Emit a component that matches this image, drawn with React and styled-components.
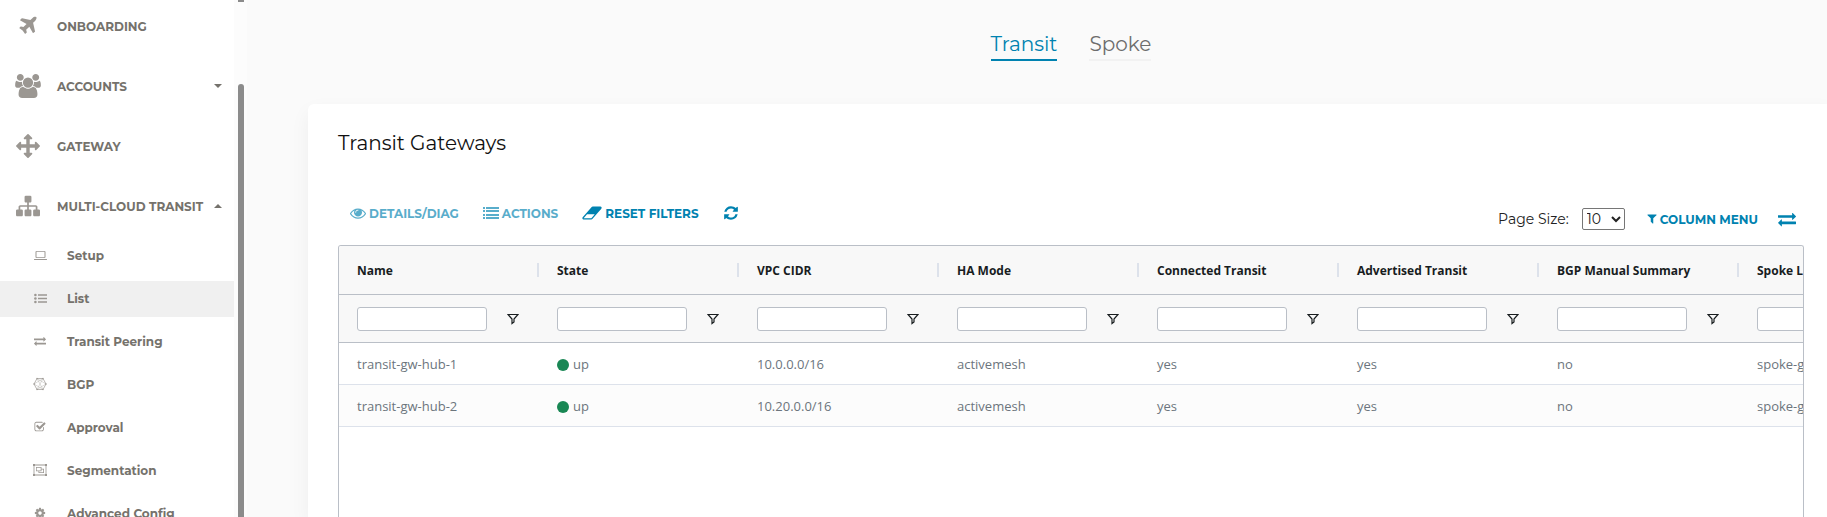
import React from "react";
import styled, { createGlobalStyle } from "styled-components";

const brand = "Montserrat, Inter, 'Open Sans', sans-serif";
const body = "'Segoe UI', 'Open Sans', 'Noto Sans', sans-serif";

const GlobalStyle = createGlobalStyle`
  *, *::before, *::after { box-sizing: border-box; }
  body {
    margin: 0;
    background: #fafafa;
    color: #212529;
    font-family: ${brand};
    overflow: hidden;
  }
  button, input, select { font-family: inherit; margin: 0; }
  a { color: inherit; text-decoration: none; }
`;

/* ---------- icons ---------- */

const Svg = styled.svg`
  display: block;
  flex: none;
  width: ${(p) => p.$w}px;
  height: ${(p) => p.$h || p.$w}px;
  fill: currentColor;
`;

const paths = {
  plane:
    "M1568 160q44 52 12 148t-108 172l-161 161 160 696q5 19-12 33l-128 96q-7 6-19 6-4 0-7-1-15-3-21-16l-279-508-259 259 53 194q5 17-8 31l-96 96q-9 9-23 9h-2q-15-2-24-13l-189-252-252-189q-11-7-13-23-1-13 9-25l96-97q9-9 23-9 6 0 8 1l194 53 259-259-508-279q-14-8-17-24-2-16 9-27l128-128q14-13 30-8l665 159 160-160q76-76 172-108t148 12z",
  users:
    "M529 896q-162 5-265 128h-134q-82 0-138-40.5t-56-118.5q0-353 124-353 6 0 43.5 21t97.5 42.5 119 21.5q67 0 133-23-5 37-5 66 0 139 81 256zm1071 637q0 120-73 189.5t-194 69.5h-874q-121 0-194-69.5t-73-189.5q0-53 3.5-103.5t14-109 26.5-108.5 43-97.5 62-81 85.5-53.5 111.5-20q10 0 43 21.5t73 48 107 48 135 21.5 135-21.5 107-48 73-48 43-21.5q61 0 111.5 20t85.5 53.5 62 81 43 97.5 26.5 108.5 14 109 3.5 103.5zm-1024-1277q0 106-75 181t-181 75-181-75-75-181 75-181 181-75 181 75 75 181zm704 384q0 159-112.5 271.5t-271.5 112.5-271.5-112.5-112.5-271.5 112.5-271.5 271.5-112.5 271.5 112.5 112.5 271.5zm576 225q0 78-56 118.5t-138 40.5h-134q-103-123-265-128 81-117 81-256 0-29-5-66 66 23 133 23 59 0 119-21.5t97.5-42.5 43.5-21q124 0 124 353zm-128-609q0 106-75 181t-181 75-181-75-75-181 75-181 181-75 181 75 75 181z",
  arrows:
    "M1792 896q0 26-19 45l-256 256q-19 19-45 19t-45-19-19-45v-128h-384v384h128q26 0 45 19t19 45-19 45l-256 256q-19 19-45 19t-45-19l-256-256q-19-19-19-45t19-45 45-19h128v-384h-384v128q0 26-19 45t-45 19-45-19l-256-256q-19-19-19-45t19-45l256-256q19-19 45-19t45 19 19 45v128h384v-384h-128q-26 0-45-19t-19-45 19-45l256-256q19-19 45-19t45 19l256 256q19 19 19 45t-19 45-45 19h-128v384h384v-128q0-26 19-45t45-19 45 19l256 256q19 19 19 45z",
  sitemap:
    "M1792 1248v320q0 40-28 68t-68 28h-320q-40 0-68-28t-28-68v-320q0-40 28-68t68-28h96v-192h-512v192h96q40 0 68 28t28 68v320q0 40-28 68t-68 28h-320q-40 0-68-28t-28-68v-320q0-40 28-68t68-28h96v-192h-512v192h96q40 0 68 28t28 68v320q0 40-28 68t-68 28h-320q-40 0-68-28t-28-68v-320q0-40 28-68t68-28h96v-192q0-52 38-90t90-38h512v-192h-96q-40 0-68-28t-28-68v-320q0-40 28-68t68-28h320q40 0 68 28t28 68v320q0 40-28 68t-68 28h-96v192h512q52 0 90 38t38 90v192h96q40 0 68 28t28 68z",
  exchange:
    "M1792 1184v192q0 13-9.5 22.5t-22.5 9.5h-1376v192q0 13-9.5 22.5t-22.5 9.5q-12 0-24-10l-319-320q-9-9-9-22 0-14 9-23l320-320q9-9 23-9 13 0 22.5 9.5t9.5 22.5v192h1376q13 0 22.5 9.5t9.5 22.5zm0-544q0 14-9 23l-320 320q-9 9-23 9-13 0-22.5-9.5t-9.5-22.5v-192h-1376q-13 0-22.5-9.5t-9.5-22.5v-192q0-13 9.5-22.5t22.5-9.5h1376v-192q0-14 9-23t23-9q12 0 24 10l319 319q9 9 9 23z",
  check:
    "M1472 930v318q0 119-84.5 203.5t-203.5 84.5h-832q-119 0-203.5-84.5t-84.5-203.5v-832q0-119 84.5-203.5t203.5-84.5h832q63 0 117 25 15 7 18 23 3 17-9 29l-49 49q-10 10-23 10-3 0-9-2-23-6-45-6h-832q-66 0-113 47t-47 113v832q0 66 47 113t113 47h832q66 0 113-47t47-113v-254q0-13 9-22l64-64q10-10 23-10 6 0 12 3 20 8 20 29zm231-489l-814 814q-24 24-57 24t-57-24l-430-430q-24-24-24-57t24-57l110-110q24-24 57-24t57 24l263 263 647-647q24-24 57-24t57 24l110 110q24 24 24 57t-24 57z",
  cog:
    "M1152 896q0-106-75-181t-181-75-181 75-75 181 75 181 181 75 181-75 75-181zm512-109v222q0 12-8 23t-20 13l-185 28q-19 54-39 91 35 50 107 138 10 12 10 25t-9 23q-27 37-99 108t-94 71q-12 0-26-9l-138-108q-44 23-91 38-16 136-29 186-7 28-36 28h-222q-14 0-24.5-8.5t-11.5-21.5l-28-184q-49-16-90-37l-141 107q-10 9-25 9-14 0-25-11-126-114-165-168-7-10-7-23 0-12 8-23 15-21 51-66.5t54-70.5q-27-50-41-99l-183-27q-13-2-21-12.5t-8-23.5v-222q0-12 8-23t19-13l186-28q14-46 39-92-40-57-107-138-10-12-10-24 0-10 9-23 26-36 98.5-107.5t94.5-71.5q13 0 26 10l138 107q44-23 91-38 16-136 29-186 7-28 36-28h222q14 0 24.5 8.5t11.5 21.5l28 184q49 16 90 37l142-107q9-9 24-9 13 0 25 10 129 119 165 170 7 8 7 22 0 12-8 23-15 21-51 66.5t-54 70.5q26 50 41 98l183 28q13 2 21 12.5t8 23.5z",
  refresh:
    "M1639 1056q0 5-1 7-64 268-268 434.5t-478 166.5q-146 0-282.5-55t-243.5-157l-129 129q-19 19-45 19t-45-19-19-45v-448q0-26 19-45t45-19h448q26 0 45 19t19 45-19 45l-137 137q71 66 161 102t187 36q134 0 250-65t186-179q11-17 53-117 8-23 30-23h192q13 0 22.5 9.5t9.5 22.5zm25-800v448q0 26-19 45t-45 19h-448q-26 0-45-19t-19-45 19-45l138-138q-148-137-349-137-134 0-250 65t-186 179q-11 17-53 117-8 23-30 23h-199q-13 0-22.5-9.5t-9.5-22.5v-7q65-268 270-434.5t480-166.5q146 0 284 55.5t245 156.5l130-129q19-19 45-19t45 19 19 45z",
  eraser:
    "M832 1408l336-384h-768l-336 384h768zm1013-1077q15 34 9.5 71.5t-30.5 65.5l-896 1024q-38 44-96 44h-768q-38 0-69.5-20.5t-47.5-54.5q-15-34-9.5-71.5t30.5-65.5l896-1024q38-44 96-44h768q38 0 69.5 20.5t47.5 54.5z",
  filter:
    "M1595 295q17 41-14 70l-493 493v742q0 42-39 59-13 5-25 5-27 0-45-19l-256-256q-19-19-19-45v-486l-493-493q-31-29-14-70 17-39 59-39h1280q42 0 59 39z",
  eye:
    "M1664 960q-152-236-381-353 61 104 61 225 0 185-131.5 316.5t-316.5 131.5-316.5-131.5-131.5-316.5q0-121 61-225-229 117-381 353 133 205 333.5 326.5t434.5 121.5 434.5-121.5 333.5-326.5zm-720-384q0-20-14-34t-34-14q-125 0-214.5 89.5t-89.5 214.5q0 20 14 34t34 14 34-14 14-34q0-86 61-147t147-61q20 0 34-14t14-34zm848 384q0 34-20 69-140 230-376.5 368.5t-499.5 138.5-499.5-139-376.5-368q-20-35-20-69t20-69q140-229 376.5-368t499.5-139 499.5 139 376.5 368q20 35 20 69z",
};

const Glyph = ({ name, w, h, box = "0 0 1792 1792" }) => (
  <Svg $w={w} $h={h} viewBox={box} aria-hidden="true">
    <path d={paths[name]} />
  </Svg>
);

const Laptop = () => (
  <Svg $w={13} $h={11} viewBox="0 0 13 11" aria-hidden="true">
    <path d="M2.5 1h8a1 1 0 0 1 1 1v5a1 1 0 0 1-1 1h-8a1 1 0 0 1-1-1V2a1 1 0 0 1 1-1zm0 .8v5.400h8V1.800zM0 9h13v.4q0 .7-1 .7H1q-1 0-1-.7z" fillRule="evenodd" />
  </Svg>
);

const ListUl = () => (
  <Svg $w={13} $h={11} viewBox="0 0 13 11" aria-hidden="true">
    <circle cx="1.400" cy="2" r="1.300" />
    <circle cx="1.400" cy="5.500" r="1.300" />
    <circle cx="1.400" cy="9" r="1.300" />
    <path d="M4 1.200h9v1.600H4zM4 4.700h9v1.600H4zM4 8.200h9v1.600H4z" />
  </Svg>
);

const ListRows = () => (
  <Svg $w={16} $h={14} viewBox="0 0 16 14" aria-hidden="true">
    {[1, 4, 8, 11].map((y) => (
      <path key={y} d={`M0 ${y}h2v2H0zM3 ${y}h13v2H3z`} />
    ))}
  </Svg>
);

const Mesh = () => (
  <Svg $w={14} $h={14} viewBox="0 0 28 28" aria-hidden="true">
    <g fill="none" stroke="currentColor" strokeWidth="1.400">
      <path d="M8 3h12l6 11-6 11H8L2 14z" />
      <path d="M8 3l12 22M20 3L8 25M2 14L20 3M2 14l18 11M26 14L8 3M26 14L8 25" strokeWidth="0.700" />
    </g>
    {[[8, 3], [20, 3], [26, 14], [20, 25], [8, 25], [2, 14]].map(([x, y]) => (
      <circle key={`${x}-${y}`} cx={x} cy={y} r="1.300" />
    ))}
  </Svg>
);

const ObjectGroup = () => (
  <Svg $w={14} $h={12} viewBox="0 0 14 12" aria-hidden="true">
    <path d="M0 0h2v.6h10V0h2v2h-.6v8h.6v2h-2v-.6H2v.6H0v-2h.600V2H0zM2 1.400V2h-.600v8H2v.600h10V10h.600V2H12v-.600z" fillRule="evenodd" />
    <path d="M3 3h5.500v1.800H11V9H5.500V7.300H3zM3.700 3.700v2.900h4V3.700zM8.500 5.500v1.800H6.200v1h4V5.500z" fillRule="evenodd" />
  </Svg>
);

const Caret = ({ up }) => (
  <Svg $w={8} $h={4} viewBox="0 0 8 4" aria-hidden="true">
    <path d={up ? "M0 4l4-4 4 4z" : "M0 0h8L4 4z"} />
  </Svg>
);

const Funnel = () => (
  <Svg $w={12} $h={12} viewBox="0 0 12 12" aria-hidden="true">
    <path
      d="M1 1.500h10L7 6v3L5 10.500V6z"
      fill="none"
      stroke="currentColor"
      strokeWidth="1.200"
    />
  </Svg>
);

/* ---------- shell ---------- */

const Page = styled.div`
  display: flex;
  height: 100vh;
  overflow: hidden;
`;

const Sidebar = styled.aside`
  display: flex;
  flex: none;
  width: 247px;
  background: #fcfcfc;
`;

const Nav = styled.nav`
  flex: none;
  width: 234px;
  overflow: hidden;
  background: #fff;
`;

const NavList = styled.ul`
  list-style: none;
  margin: 0;
  padding: 0;
  margin-top: ${(p) => (p.$scrolled ? -4 : 0)}px;
`;

const NavLink = styled.a`
  display: flex;
  align-items: center;
  height: 60px;
  padding: 0 12px 0 15px;
  color: #75726c;
  font-size: 12px;
  font-weight: 700;
  white-space: nowrap;
`;

const NavIcon = styled.span`
  display: flex;
  justify-content: center;
  flex: none;
  width: 26px;
  margin-right: 16px;
  color: #9b9792;
`;

const NavLabel = styled.span`
  flex: 1;
`;

const SubList = styled.ul`
  list-style: none;
  display: flex;
  flex-direction: column;
  gap: 7px;
  margin: 0;
  padding: 2px 0 0;
`;

const SubLink = styled.a`
  display: flex;
  align-items: center;
  height: 36px;
  padding: 0 0 2px 33px;
  gap: 20px;
  color: #75726c;
  background: ${(p) => (p.$active ? "#f0f0f0" : "transparent")};
  font-size: 12px;
  font-weight: 700;
  white-space: nowrap;
`;

const SubIcon = styled.span`
  display: flex;
  justify-content: center;
  flex: none;
  width: 14px;
  color: #9b9792;
`;

const Gutter = styled.div`
  display: flex;
  flex-direction: column;
  gap: 82px;
  width: 6px;
  margin-left: 4px;
`;

const ScrollEnd = styled.span`
  height: 2px;
  background: #8b8b8b;
`;

const ScrollThumb = styled.span`
  flex: 1;
  border-radius: 3px 3px 0 0;
  background: #8b8b8b;
`;

const Main = styled.main`
  flex: 1;
  min-width: 0;
  display: flex;
  flex-direction: column;
  margin-right: -7px;
  padding-left: 61px;
`;

const Tabs = styled.div`
  display: flex;
  justify-content: center;
  align-items: flex-start;
  gap: 32px;
  height: 104px;
  padding-top: 30px;
`;

const Tab = styled.a`
  height: 31px;
  border-bottom: 2px solid ${(p) => (p.$active ? "#0082b0" : "#f2f2f2")};
  color: ${(p) => (p.$active ? "#0082b0" : "#6d6d6d")};
  font-size: 20px;
  line-height: 28px;
  font-weight: 400;
`;

const Card = styled.section`
  flex: 1;
  display: flex;
  flex-direction: column;
  min-height: 0;
  padding: 24px 30px 0;
  border-radius: 6px 6px 0 0;
  background: #fff;
  box-shadow: 0 8px 20px rgba(0, 0, 0, 0.05);
`;

const Title = styled.h1`
  margin: 0;
  color: #111;
  font-size: 20px;
  line-height: 30px;
  font-weight: 400;
`;

/* ---------- toolbar ---------- */

const Toolbar = styled.div`
  display: flex;
  justify-content: space-between;
  align-items: flex-start;
  height: 87px;
`;

const Actions = styled.div`
  display: flex;
  align-items: center;
  gap: 24px;
  height: 30px;
  margin: 40px 0 0 12px;
`;

const View = styled.div`
  display: flex;
  align-items: center;
  height: 30px;
  margin: 46px 8px 0 0;
  font-size: 14px;
`;

const ToolButton = styled.button`
  display: flex;
  align-items: center;
  gap: 3px;
  padding: 0;
  border: 0;
  background: none;
  color: #0082b0;
  opacity: ${(p) => (p.disabled ? 0.65 : 1)};
  font-size: 12px;
  font-weight: 700;
  white-space: nowrap;
`;

const PageSize = styled.label`
  display: flex;
  align-items: center;
  gap: 13px;
  margin-right: 22px;
  color: #222;
`;

const Select = styled.select`
  width: 43px;
  height: 22px;
  padding: 0;
  border: 1px solid #767676;
  border-radius: 2px;
  background: #fff;
  color: #222;
  font-size: 14px;
`;

const Swap = styled(ToolButton)`
  margin-left: 20px;
`;

/* ---------- grid ---------- */

const GridFrame = styled.div`
  flex: 1;
  overflow: hidden;
  border: 1px solid #babfc7;
  border-bottom: 0;
  border-radius: 3px 3px 0 0;
  font-family: ${body};
`;

const Table = styled.table`
  width: 1600px;
  table-layout: fixed;
  border-collapse: separate;
  border-spacing: 0;
`;

const HeadCell = styled.th`
  height: 49px;
  padding: 0 0 0 18px;
  border-bottom: 1px solid #babfc7;
  background: #f8f8f8;
  color: #181d1f;
  font-size: 12px;
  font-weight: 700;
  text-align: left;
  white-space: nowrap;
`;

const HeadInner = styled.div`
  display: flex;
  align-items: center;
  justify-content: space-between;
  height: 20px;

  &::after {
    content: "";
    width: 2px;
    height: 14px;
    background: #dde2eb;
  }
`;

const FilterCell = styled(HeadCell)`
  height: 48px;
`;

const FilterInner = styled.div`
  display: flex;
  align-items: center;
  gap: 20px;
`;

const FilterInput = styled.input`
  width: 130px;
  height: 24px;
  border: 1px solid #babfc7;
  border-radius: 3px;
  background: #fff;
`;

const FilterButton = styled.button`
  padding: 0;
  border: 0;
  background: none;
  color: #181d1f;
`;

const Row = styled.tr`
  background: ${(p) => (p.$odd ? "#fcfcfc" : "#fff")};
`;

const Cell = styled.td`
  height: 42px;
  padding: 0 0 0 18px;
  border-bottom: 1px solid #dde2eb;
  color: #6c757d;
  font-size: 13px;
  white-space: nowrap;
`;

const Status = styled.span`
  display: flex;
  align-items: center;
  gap: 4px;

  &::before {
    content: "";
    width: 12px;
    height: 12px;
    margin-top: 2px;
    border-radius: 50%;
    background: #198754;
  }
`;

/* ---------- data ---------- */

const sections = [
  { label: "ONBOARDING", icon: <Glyph name="plane" w={22} /> },
  { label: "ACCOUNTS", icon: <Glyph name="users" w={26} h={24} box="-64 0 1920 1792" />, caret: "down" },
  { label: "GATEWAY", icon: <Glyph name="arrows" w={24} /> },
  {
    label: "MULTI-CLOUD TRANSIT",
    icon: <Glyph name="sitemap" w={24} />,
    caret: "up",
    children: [
      { label: "Setup", icon: <Laptop /> },
      { label: "List", icon: <ListUl />, active: true },
      { label: "Transit Peering", icon: <Glyph name="exchange" w={12} /> },
      { label: "BGP", icon: <Mesh /> },
      { label: "Approval", icon: <Glyph name="check" w={12} /> },
      { label: "Segmentation", icon: <ObjectGroup /> },
      { label: "Advanced Config", icon: <Glyph name="cog" w={12} /> },
    ],
  },
];

const columns = [
  "Name",
  "State",
  "VPC CIDR",
  "HA Mode",
  "Connected Transit",
  "Advertised Transit",
  "BGP Manual Summary",
  "Spoke List",
];

const gateways = [
  ["transit-gw-hub-1", "up", "10.0.0.0/16", "activemesh", "yes", "yes", "no", "spoke-gw-1"],
  ["transit-gw-hub-2", "up", "10.20.0.0/16", "activemesh", "yes", "yes", "no", "spoke-gw-2"],
];

export default function App() {
  return (
    <>
      <GlobalStyle />
      <Page>
        <Sidebar>
          <Nav aria-label="Main">
            <NavList $scrolled>
              {sections.map((s) => (
                <li key={s.label}>
                  <NavLink href="#">
                    <NavIcon>{s.icon}</NavIcon>
                    <NavLabel>{s.label}</NavLabel>
                    {s.caret && <Caret up={s.caret === "up"} />}
                  </NavLink>
                  {s.children && (
                    <SubList>
                      {s.children.map((c) => (
                        <li key={c.label}>
                          <SubLink href="#" $active={c.active}>
                            <SubIcon>{c.icon}</SubIcon>
                            {c.label}
                          </SubLink>
                        </li>
                      ))}
                    </SubList>
                  )}
                </li>
              ))}
            </NavList>
          </Nav>
          <Gutter>
            <ScrollEnd />
            <ScrollThumb />
          </Gutter>
        </Sidebar>

        <Main>
          <Tabs>
            <Tab href="#transit" $active>Transit</Tab>
            <Tab href="#spoke">Spoke</Tab>
          </Tabs>
          <Card>
            <Title>Transit Gateways</Title>
            <Toolbar>
              <Actions>
                <ToolButton disabled>
                  <Glyph name="eye" w={16} />
                  DETAILS/DIAG
                </ToolButton>
                <ToolButton disabled>
                  <ListRows />
                  ACTIONS
                </ToolButton>
                <ToolButton>
                  <Glyph name="eraser" w={20} h={18} box="-64 0 1920 1792" />
                  RESET FILTERS
                </ToolButton>
                <ToolButton aria-label="Refresh">
                  <Glyph name="refresh" w={16} />
                </ToolButton>
              </Actions>
              <View>
                <PageSize>
                  Page Size:
                  <Select defaultValue="10">
                    <option>10</option>
                    <option>25</option>
                    <option>50</option>
                  </Select>
                </PageSize>
                <ToolButton>
                  <Glyph name="filter" w={10} h={10} box="128 192 1536 1536" />
                  COLUMN MENU
                </ToolButton>
                <Swap aria-label="Toggle columns">
                  <Glyph name="exchange" w={18} />
                </Swap>
              </View>
            </Toolbar>
            <GridFrame>
              <Table>
                <thead>
                  <tr>
                    {columns.map((c) => (
                      <HeadCell key={c} scope="col">
                        <HeadInner>{c}</HeadInner>
                      </HeadCell>
                    ))}
                  </tr>
                  <tr>
                    {columns.map((c) => (
                      <FilterCell as="td" key={c}>
                        <FilterInner>
                          <FilterInput type="text" aria-label={`${c} filter`} />
                          <FilterButton aria-label={`Open ${c} filter menu`}>
                            <Funnel />
                          </FilterButton>
                        </FilterInner>
                      </FilterCell>
                    ))}
                  </tr>
                </thead>
                <tbody>
                  {gateways.map((g, i) => (
                    <Row key={g[0]} $odd={i % 2 === 1}>
                      {g.map((v, j) => (
                        <Cell key={columns[j]}>{j === 1 ? <Status>{v}</Status> : v}</Cell>
                      ))}
                    </Row>
                  ))}
                </tbody>
              </Table>
            </GridFrame>
          </Card>
        </Main>
      </Page>
    </>
  );
}
